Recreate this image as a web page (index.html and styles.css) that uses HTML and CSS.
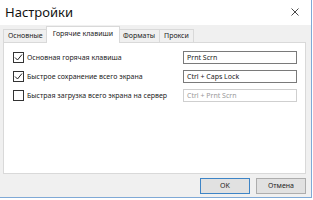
FILE: index.html
```html
<!DOCTYPE html>
<html>
<head>
<meta charset="utf-8">
<link rel="stylesheet" href="styles.css">
</head>
<body>
<div class="window">
  <div class="titlebar">
    <span class="title">Настройки</span>
    <svg class="close" width="8" height="8" viewBox="0 0 8 8"><path d="M0.5 0.5L7.5 7.5M7.5 0.5L0.5 7.5" stroke="#333" stroke-width="0.9"/></svg>
  </div>
  <div class="content">
    <div class="tabs">
      <div class="tab">Основные</div>
      <div class="tab active">Горячие клавиши</div>
      <div class="tab">Форматы</div>
      <div class="tab">Прокси</div>
    </div>
    <div class="panel">
      <div class="row">
        <span class="check on"><svg width="9" height="9" viewBox="0 0 9 9"><path d="M1 4.5L3.5 7L8 1.5" fill="none" stroke="#222" stroke-width="1"/></svg></span>
        <span class="label">Основная горячая клавиша</span>
        <span class="field">Prnt Scrn</span>
      </div>
      <div class="row">
        <span class="check on"><svg width="9" height="9" viewBox="0 0 9 9"><path d="M1 4.5L3.5 7L8 1.5" fill="none" stroke="#222" stroke-width="1"/></svg></span>
        <span class="label">Быстрое сохранение всего экрана</span>
        <span class="field">Ctrl + Caps Lock</span>
      </div>
      <div class="row">
        <span class="check"></span>
        <span class="label">Быстрая загрузка всего экрана на сервер</span>
        <span class="field disabled">Ctrl + Prnt Scrn</span>
      </div>
    </div>
    <div class="buttons">
      <div class="btn default">OK</div>
      <div class="btn">Отмена</div>
    </div>
  </div>
</div>
</body>
</html>
```
FILE: styles.css
```css
*, *::before, *::after {
  box-sizing: border-box;
}
html, body {
  margin: 0;
  padding: 0;
  background: #ffffff;
}
body {
  width: 313px;
  height: 200px;
  overflow: hidden;
  font-family: "Noto Sans", "Open Sans", sans-serif;
  color: #1a1a1a;
}
.window {
  width: 312px;
  height: 198px;
  border-right: 1px solid #7fa9d6;
  border-bottom: 1px solid #7fa9d6;
  display: flex;
  flex-direction: column;
  background: #f0f0f0;
}
.titlebar {
  height: 25px;
  background: #ffffff;
  display: flex;
  align-items: center;
  justify-content: space-between;
  padding: 0 12px 0 5px;
  flex: none;
}
.title {
  font-size: 13px;
  color: #111;
  line-height: 16px;
  margin-top: -2px;
}
.close {
  margin-top: -2px;
}
.content {
  flex: 1;
  display: flex;
  flex-direction: column;
  padding: 0 5px 0 3px;
}
.tabs {
  display: flex;
  align-items: flex-end;
  height: 17px;
  font-size: 7px;
  flex: none;
}
.tab {
  height: 13px;
  line-height: 12px;
  border: 1px solid #d9d9d9;
  border-bottom: none;
  background: #f0f0f0;
  padding: 0 4px;
  margin-left: -1px;
  color: #222;
}
.tab:first-child {
  margin-left: 0;
}
.tab.active {
  height: 17px;
  line-height: 14px;
  background: #ffffff;
  margin: 0 -1px -1px -2px;
  padding: 0 6px;
  position: relative;
  z-index: 1;
}
.panel {
  height: 132px;
  flex: none;
  background: #ffffff;
  border: 1px solid #d9d9d9;
  padding: 8px 8px 0 9px;
  display: flex;
  flex-direction: column;
  gap: 6px;
}
.row {
  display: flex;
  align-items: center;
  height: 13px;
  font-size: 7px;
}
.check {
  width: 11px;
  height: 11px;
  border: 1px solid #333;
  background: #fff;
  flex: none;
  display: flex;
}
.label {
  flex: 1;
  margin-left: 3px;
  color: #222;
}
.field {
  width: 114px;
  height: 13px;
  line-height: 11px;
  border: 1px solid #7a7a7a;
  padding-left: 3px;
  color: #222;
  flex: none;
}
.field.disabled {
  border-color: #cfcfcf;
  color: #9a9a9a;
}
.buttons {
  display: flex;
  justify-content: flex-end;
  gap: 6px;
  margin-top: 4px;
}
.btn {
  width: 50px;
  height: 16px;
  line-height: 14px;
  border: 1px solid #adadad;
  background: #e1e1e1;
  text-align: center;
  font-size: 7px;
  color: #222;
}
.btn.default {
  border-color: #3d84c6;
}
```
